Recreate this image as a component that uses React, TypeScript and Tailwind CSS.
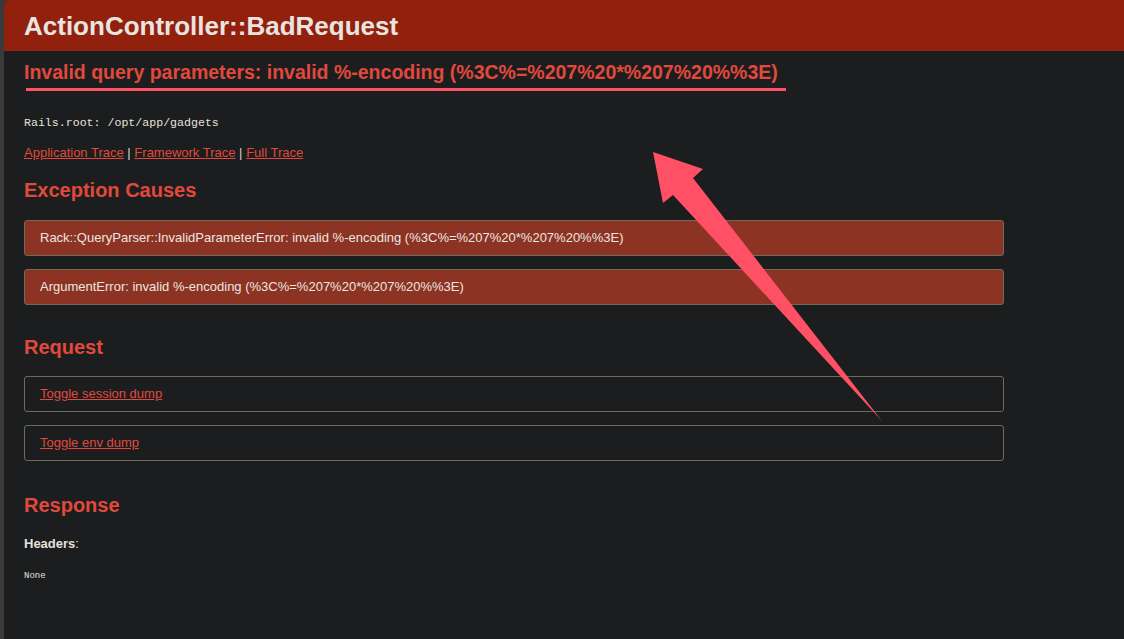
import React from "react";

const sans = { fontFamily: '"Liberation Sans", Arial, Helvetica, sans-serif' };

function Box({ children, filled }: { children: React.ReactNode; filled?: boolean }) {
  return (
    <div
      className={
        "w-[980px] h-[36px] flex items-center px-[15px] rounded-[3px] border border-[#6e6a5c] text-[13px] " +
        (filled ? "bg-[#8c3323] text-[#ece6e0]" : "bg-transparent")
      }
    >
      {children}
    </div>
  );
}

export default function App() {
  return (
    <div className="relative w-[1124px] h-[639px] overflow-hidden bg-[#3a3a3a] flex" style={sans}>
      <div className="ml-[4px] flex-1 flex flex-col bg-[#1c1d1f] rounded-tl-[6px] overflow-hidden">
        <header className="h-[51px] bg-[#91210c] flex items-center px-[20px]">
          <h1 className="text-[26px] font-bold text-[#e9e4e0] leading-none">ActionController::BadRequest</h1>
        </header>
        <main className="px-[20px] flex flex-col">
          <h2 className="mt-[9px] text-[19.5px] font-bold text-[#e0493b] leading-[24px]">
            Invalid query parameters: invalid %-encoding (%3C%=%207%20*%207%20%%3E)
          </h2>
          <div className="mt-[4px] ml-[2px] w-[760px] h-[3px] bg-[#ff5066]" />
          <p className="mt-[24px] text-[11.6px] text-[#e6e1dc] leading-[15px]" style={{ fontFamily: '"Liberation Mono", "Courier New", monospace' }}>
            Rails.root: /opt/app/gadgets
          </p>
          <p className="mt-[15px] text-[13px] text-[#cfd4d8] leading-[16px]">
            <a className="text-[#e0493b] underline">Application Trace</a> |{" "}
            <a className="text-[#e0493b] underline">Framework Trace</a> |{" "}
            <a className="text-[#e0493b] underline">Full Trace</a>
          </p>
          <h2 className="mt-[17px] text-[20px] font-bold text-[#e0493b] leading-[24px]">Exception Causes</h2>
          <div className="mt-[18px] flex flex-col gap-[13px]">
            <Box filled>Rack::QueryParser::InvalidParameterError: invalid %-encoding (%3C%=%207%20*%207%20%%3E)</Box>
            <Box filled>ArgumentError: invalid %-encoding (%3C%=%207%20*%207%20%%3E)</Box>
          </div>
          <h2 className="mt-[30px] text-[20px] font-bold text-[#e0493b] leading-[24px]">Request</h2>
          <div className="mt-[17px] flex flex-col gap-[13px]">
            <Box>
              <a className="text-[#e0493b] underline">Toggle session dump</a>
            </Box>
            <Box>
              <a className="text-[#e0493b] underline">Toggle env dump</a>
            </Box>
          </div>
          <h2 className="mt-[32px] text-[20px] font-bold text-[#e0493b] leading-[24px]">Response</h2>
          <p className="mt-[19px] text-[13px] font-bold text-[#e6e1dc] leading-[16px]">
            Headers<span className="font-normal">:</span>
          </p>
          <p className="mt-[18px] text-[9px] text-[#e6e1dc] leading-[12px]" style={{ fontFamily: '"Liberation Mono", "Courier New", monospace' }}>
            None
          </p>
        </main>
      </div>
      <svg className="absolute left-0 top-0 pointer-events-none" width="1124" height="639" viewBox="0 0 1124 639">
        <polygon
          points="653,152 703,169 693,178 882,421 673,195 663,203"
          fill="#ff5066"
        />
      </svg>
    </div>
  );
}
